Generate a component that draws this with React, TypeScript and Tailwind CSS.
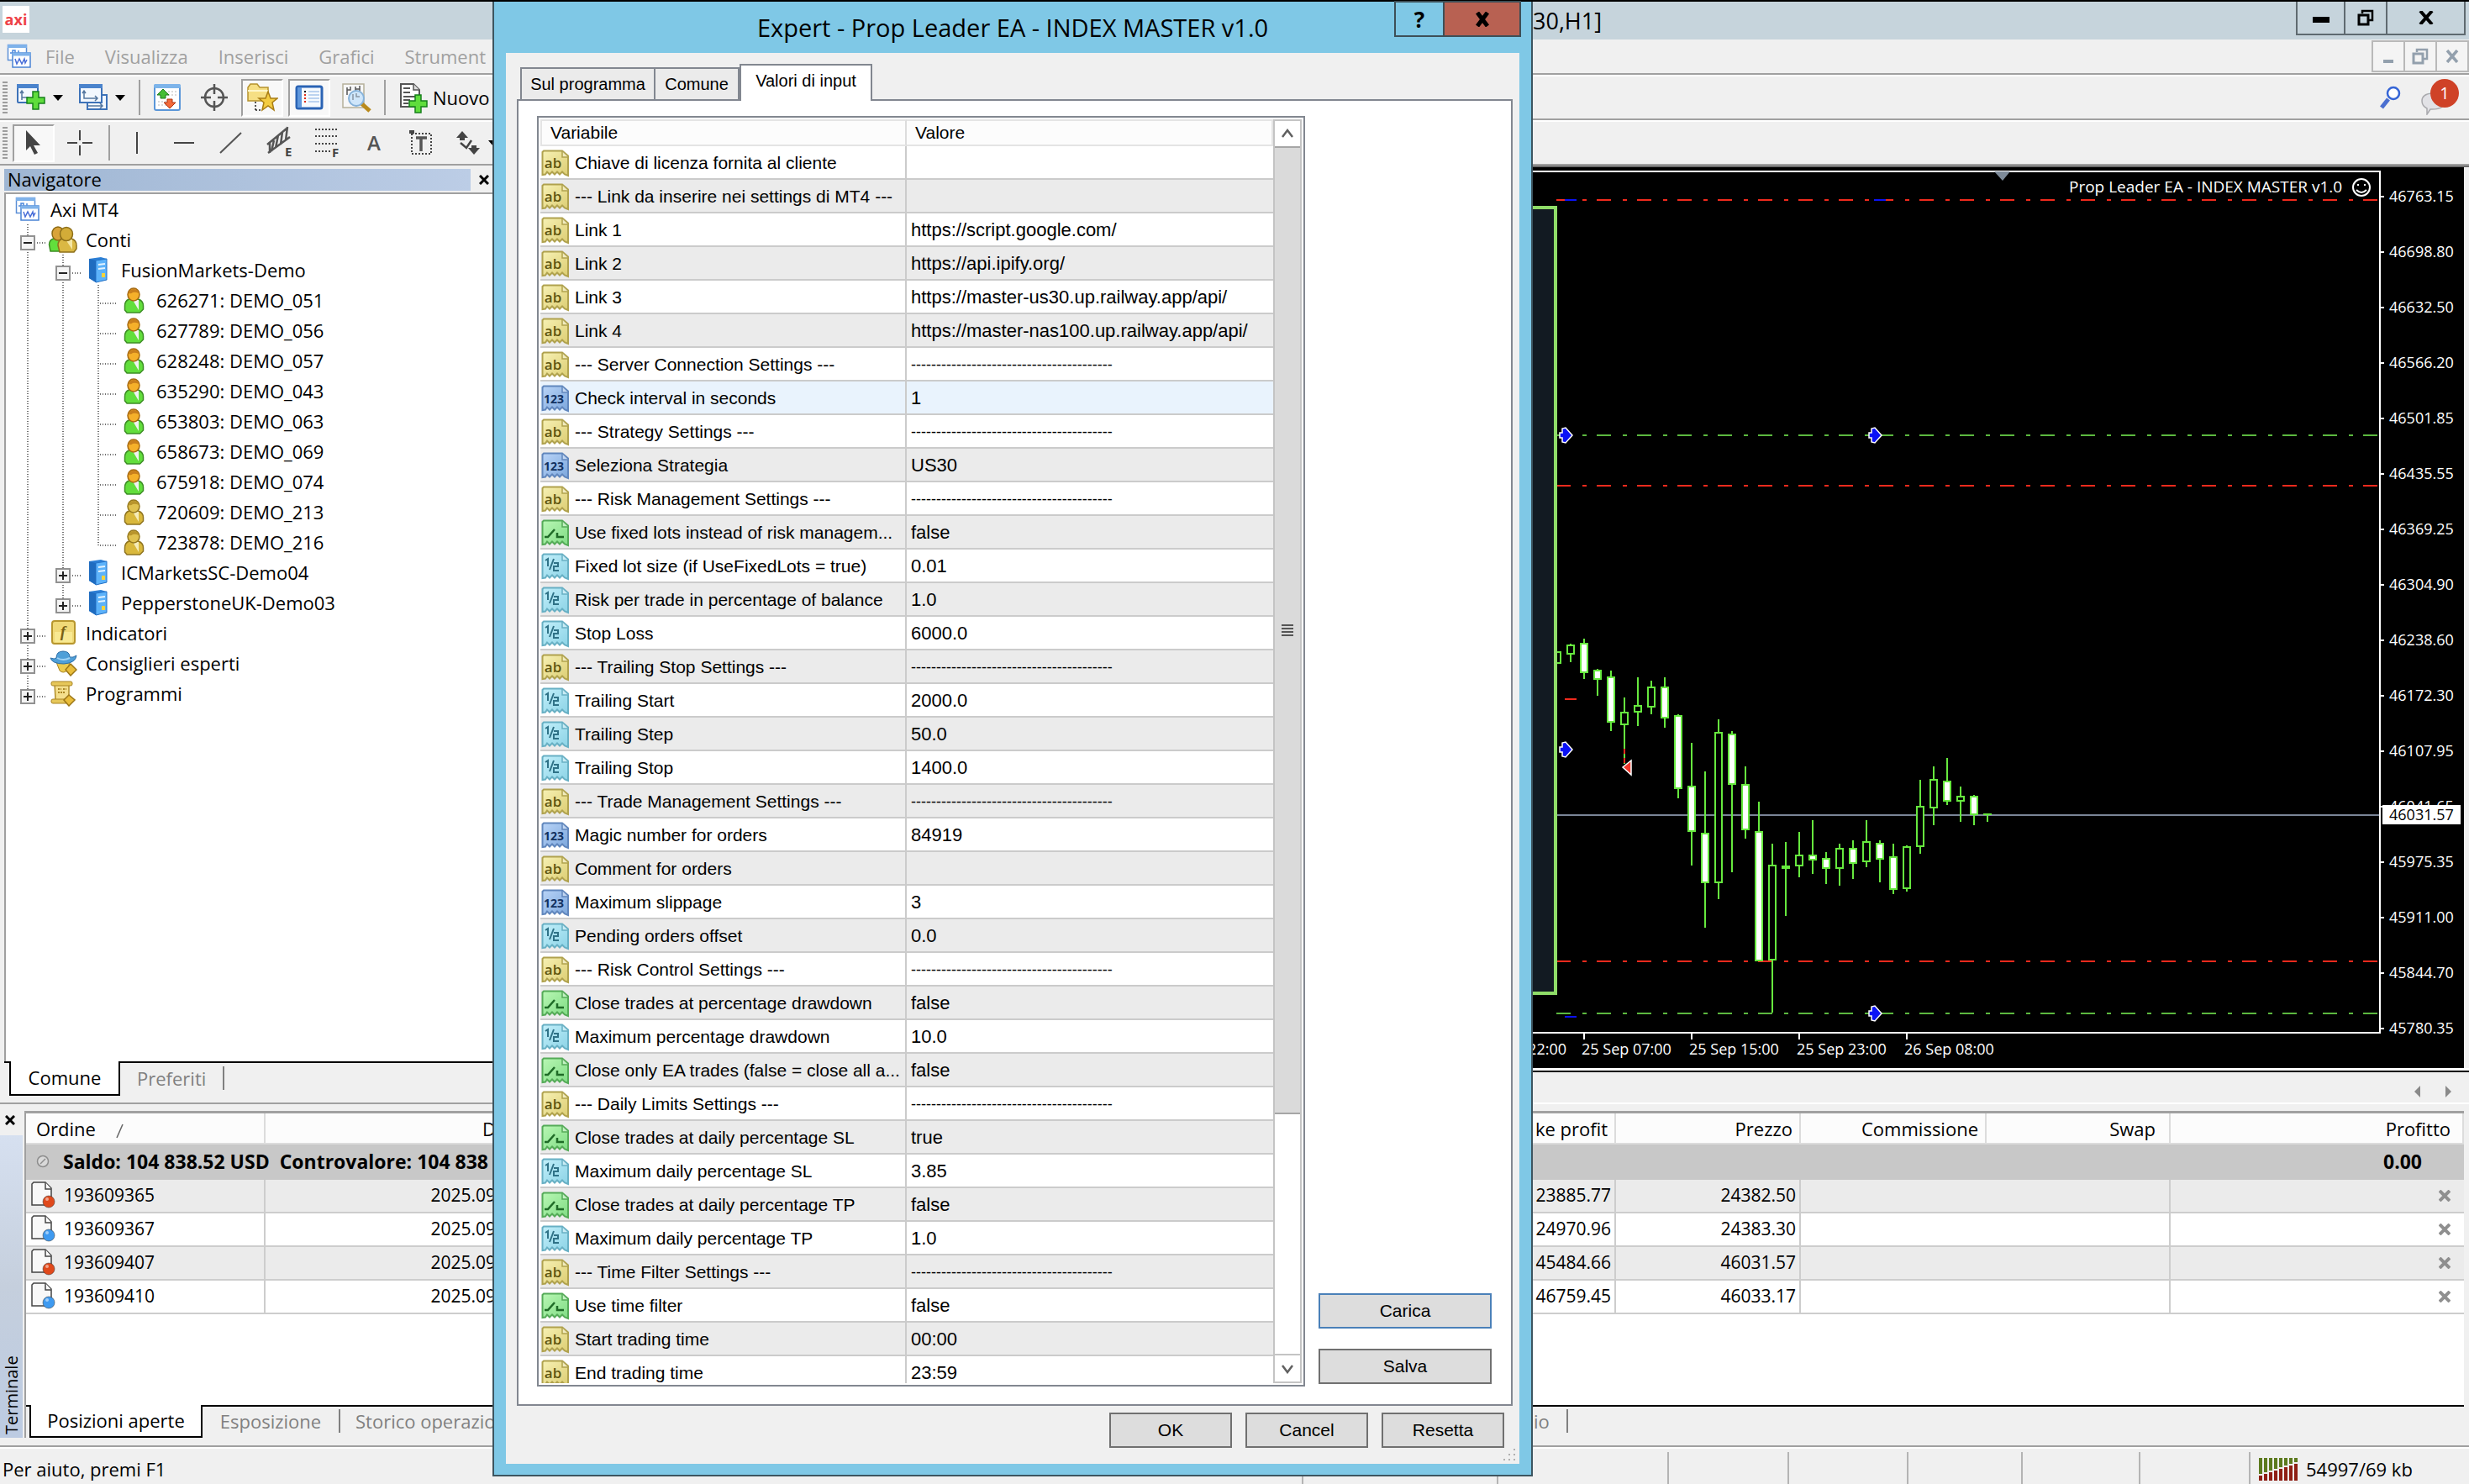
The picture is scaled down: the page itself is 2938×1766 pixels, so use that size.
import type { ReactNode } from "react"
import clsx from "clsx"

type ParamType = "text" | "int" | "bool" | "real"

interface Param {
  type: ParamType
  name: string
  value?: string
  active?: boolean
}

const RULE = "----------------------------------------"

const params: Param[] = [
  { type: "text", name: "Chiave di licenza fornita al cliente" },
  { type: "text", name: "--- Link da inserire nei settings di MT4 ---" },
  { type: "text", name: "Link 1", value: "https://script.google.com/" },
  { type: "text", name: "Link 2", value: "https://api.ipify.org/" },
  { type: "text", name: "Link 3", value: "https://master-us30.up.railway.app/api/" },
  { type: "text", name: "Link 4", value: "https://master-nas100.up.railway.app/api/" },
  { type: "text", name: "--- Server Connection Settings ---", value: RULE },
  { type: "int", name: "Check interval in seconds", value: "1", active: true },
  { type: "text", name: "--- Strategy Settings ---", value: RULE },
  { type: "int", name: "Seleziona Strategia", value: "US30" },
  { type: "text", name: "--- Risk Management Settings ---", value: RULE },
  { type: "bool", name: "Use fixed lots instead of risk managem...", value: "false" },
  { type: "real", name: "Fixed lot size (if UseFixedLots = true)", value: "0.01" },
  { type: "real", name: "Risk per trade in percentage of balance", value: "1.0" },
  { type: "real", name: "Stop Loss", value: "6000.0" },
  { type: "text", name: "--- Trailing Stop Settings ---", value: RULE },
  { type: "real", name: "Trailing Start", value: "2000.0" },
  { type: "real", name: "Trailing Step", value: "50.0" },
  { type: "real", name: "Trailing Stop", value: "1400.0" },
  { type: "text", name: "--- Trade Management Settings ---", value: RULE },
  { type: "int", name: "Magic number for orders", value: "84919" },
  { type: "text", name: "Comment for orders" },
  { type: "int", name: "Maximum slippage", value: "3" },
  { type: "real", name: "Pending orders offset", value: "0.0" },
  { type: "text", name: "--- Risk Control Settings ---", value: RULE },
  { type: "bool", name: "Close trades at percentage drawdown", value: "false" },
  { type: "real", name: "Maximum percentage drawdown", value: "10.0" },
  { type: "bool", name: "Close only EA trades (false = close all a...", value: "false" },
  { type: "text", name: "--- Daily Limits Settings ---", value: RULE },
  { type: "bool", name: "Close trades at daily percentage SL", value: "true" },
  { type: "real", name: "Maximum daily percentage SL", value: "3.85" },
  { type: "bool", name: "Close trades at daily percentage TP", value: "false" },
  { type: "real", name: "Maximum daily percentage TP", value: "1.0" },
  { type: "text", name: "--- Time Filter Settings ---", value: RULE },
  { type: "bool", name: "Use time filter", value: "false" },
  { type: "text", name: "Start trading time", value: "00:00" },
  { type: "text", name: "End trading time", value: "23:59" },
]

type GuideKind = "line" | "tee" | "end" | "minus" | "plus" | "plusEnd"

interface TreeRow {
  guides: GuideKind[]
  icon: "terminal" | "group" | "server" | "user" | "idle" | "indicator" | "expert" | "script"
  label: string
}

const tree: TreeRow[] = [
  { guides: [], icon: "terminal", label: "Axi MT4" },
  { guides: ["minus"], icon: "group", label: "Conti" },
  { guides: ["line", "minus"], icon: "server", label: "FusionMarkets-Demo" },
  { guides: ["line", "line", "tee"], icon: "user", label: "626271: DEMO_051" },
  { guides: ["line", "line", "tee"], icon: "user", label: "627789: DEMO_056" },
  { guides: ["line", "line", "tee"], icon: "user", label: "628248: DEMO_057" },
  { guides: ["line", "line", "tee"], icon: "user", label: "635290: DEMO_043" },
  { guides: ["line", "line", "tee"], icon: "user", label: "653803: DEMO_063" },
  { guides: ["line", "line", "tee"], icon: "user", label: "658673: DEMO_069" },
  { guides: ["line", "line", "tee"], icon: "user", label: "675918: DEMO_074" },
  { guides: ["line", "line", "tee"], icon: "idle", label: "720609: DEMO_213" },
  { guides: ["line", "line", "end"], icon: "idle", label: "723878: DEMO_216" },
  { guides: ["line", "plus"], icon: "server", label: "ICMarketsSC-Demo04" },
  { guides: ["line", "plusEnd"], icon: "server", label: "PepperstoneUK-Demo03" },
  { guides: ["plus"], icon: "indicator", label: "Indicatori" },
  { guides: ["plus"], icon: "expert", label: "Consiglieri esperti" },
  { guides: ["plusEnd"], icon: "script", label: "Programmi" },
]

const orders = [
  { id: "193609365", color: "#e0491b", date: "2025.09", tp: "23885.77", price: "24382.50" },
  { id: "193609367", color: "#3f9af0", date: "2025.09", tp: "24970.96", price: "24383.30" },
  { id: "193609407", color: "#e0491b", date: "2025.09", tp: "45484.66", price: "46031.57" },
  { id: "193609410", color: "#3f9af0", date: "2025.09", tp: "46759.45", price: "46033.17" },
]

// high, body top, body bottom, low, bearish
const candles: [number, number, number, number, boolean][] = [
  [567, 569, 579, 589, false],
  [561, 567, 601, 609, true],
  [597, 599, 609, 629, true],
  [599, 607, 660, 671, true],
  [631, 649, 663, 710, false],
  [607, 641, 648, 665, false],
  [611, 619, 642, 651, false],
  [607, 619, 655, 667, true],
  [651, 653, 739, 751, true],
  [685, 737, 790, 831, true],
  [719, 793, 851, 905, true],
  [657, 673, 851, 871, false],
  [671, 675, 734, 839, true],
  [713, 735, 788, 799, true],
  [755, 791, 944, 944, true],
  [805, 831, 943, 1006, false],
  [803, 832, 834, 891, false],
  [791, 819, 831, 845, false],
  [777, 819, 824, 841, true],
  [815, 823, 834, 853, true],
  [805, 811, 834, 855, false],
  [801, 811, 828, 847, true],
  [777, 803, 826, 833, false],
  [801, 805, 823, 851, true],
  [805, 821, 859, 865, true],
  [807, 809, 858, 862, false],
  [729, 761, 808, 817, false],
  [713, 729, 762, 783, false],
  [703, 731, 754, 759, true],
  [737, 749, 754, 779, false],
  [747, 749, 770, 783, true],
  [770, 770, 770, 779, false],
]

const prices = [
  "46763.15", "46698.80", "46632.50", "46566.20", "46501.85", "46435.55", "46369.25", "46304.90",
  "46238.60", "46172.30", "46107.95", "46041.65", "45975.35", "45911.00", "45844.70", "45780.35",
]

const times = ["25 Sep 07:00", "25 Sep 15:00", "25 Sep 23:00", "26 Sep 08:00"]

/* ---------- icons ---------- */

const paper: Record<ParamType, { from: string; to: string; line: string; ink: string; mark: string }> = {
  text: { from: "#f7f1b4", to: "#dccd72", line: "#b0a24e", ink: "#5f5510", mark: "ab" },
  int: { from: "#b9d4f7", to: "#7ba6dc", line: "#6187bd", ink: "#12315f", mark: "123" },
  bool: { from: "#b9f7b4", to: "#7fdc84", line: "#55ab58", ink: "#1f6b27", mark: "" },
  real: { from: "#c2effa", to: "#8bd3e6", line: "#68b0c4", ink: "#2f7287", mark: "" },
}

function ParamIcon({ type }: { type: ParamType }) {
  const c = paper[type]
  return (
    <svg width="34" height="33" viewBox="0 0 34 33" className="shrink-0" aria-hidden="true">
      <defs>
        <linearGradient id={`paper-${type}`} x1="0" y1="0" x2="1" y2="1">
          <stop offset="0" stopColor={c.from} />
          <stop offset="1" stopColor={c.to} />
        </linearGradient>
      </defs>
      <path
        d="M3 1.5H25l7 6V31l-4-1.5-3-3-3 3-3-3-3 3-3-3-3 3-3-3-2 3L1.5 30V3z"
        fill={`url(#paper-${type})`}
        stroke={c.line}
        strokeWidth="2"
      />
      <path d="M25 2v7h7" fill="#ffffff66" stroke={c.line} strokeWidth="1.5" />
      {type === "text" && (
        <text x="14" y="22" textAnchor="middle" fontSize="17" fontWeight="600" fill={c.ink} fontFamily="Open Sans">
          {c.mark}
        </text>
      )}
      {type === "int" && (
        <text x="15" y="22" textAnchor="middle" fontSize="14" fontWeight="700" fill={c.ink} fontFamily="Open Sans">
          {c.mark}
        </text>
      )}
      {type === "bool" && (
        <path d="M4 21h4l8-9M19 16v5h8" fill="none" stroke={c.ink} strokeWidth="2.5" />
      )}
      {type === "real" && (
        <>
          <path d="M5 9l3-2v9M15 7l-5 13" fill="none" stroke={c.ink} strokeWidth="2" />
          <path d="M15 12h5v4h-5v5h6" fill="none" stroke={c.ink} strokeWidth="2" />
        </>
      )}
    </svg>
  )
}

function TerminalIcon() {
  return (
    <svg width="30" height="30" viewBox="0 0 30 30" aria-hidden="true">
      <rect x="1.5" y="1.5" width="22" height="18" fill="#fff" stroke="#5b8fd6" strokeWidth="1.5" />
      <rect x="1" y="1" width="23" height="4" fill="#7fb2ea" />
      <path d="M4 11h3v-3h3v4h4v-4" fill="none" stroke="#4b86dc" strokeWidth="1.5" />
      <rect x="7" y="11" width="21" height="17" fill="#fff" stroke="#4a83d4" strokeWidth="1.5" />
      <rect x="6.5" y="10.5" width="22" height="4" fill="#7fb2ea" />
      <path d="M10 18l2 6 3-6 3 6 3-6 1 5 2-4" fill="none" stroke="#4a6fd8" strokeWidth="1.5" />
    </svg>
  )
}

function UserIcon({ idle }: { idle?: boolean }) {
  return (
    <svg width="25" height="31" viewBox="0 0 25 31" aria-hidden="true">
      <path
        d="M1.5 22q0-6 5-8h11q6 2 6 8v4l-4 4H4l-2.500-3z"
        fill={idle ? "#d9b83c" : "#62de3c"}
        stroke={idle ? "#8f7420" : "#3c8d24"}
        strokeWidth="1.5"
      />
      <path d="M11 15l7 12V15z" fill={idle ? "#f6ecb8" : "#f1f1f1"} />
      <ellipse cx="12" cy="8.500" rx="7" ry="7.500" fill={idle ? "#e0c250" : "#f5b02a"} stroke={idle ? "#96791f" : "#a66a12"} strokeWidth="1.5" />
      <path d="M6 7q1-5 6-5t6 5q-4-2-7-1-2 2-5 1z" fill={idle ? "#b8942c" : "#c97f1c"} />
    </svg>
  )
}

function GroupIcon() {
  return (
    <svg width="36" height="32" viewBox="0 0 36 32" aria-hidden="true">
      <path d="M1.500 22q0-5 5-7h8v15H3z" fill="#62de3c" stroke="#3c8d24" strokeWidth="1.500" />
      <ellipse cx="12" cy="9" rx="7" ry="8" fill="#d9a33a" stroke="#8d6a14" strokeWidth="1.500" />
      <path d="M12 23q0-6 5-8h11q6 2 6 8v4l-3 4H14z" fill="#dab844" stroke="#8d6f1a" strokeWidth="1.500" />
      <path d="M21 16l8 12V16z" fill="#f4e6a4" />
      <ellipse cx="22" cy="9.500" rx="7.500" ry="8" fill="#d3ac38" stroke="#8d6f1a" strokeWidth="1.500" />
    </svg>
  )
}

function ServerIcon() {
  return (
    <svg width="24" height="32" viewBox="0 0 24 32" aria-hidden="true">
      <path d="M1 3l14-2 7 2v25l-13 3-8-5z" fill="#2c7fd6" />
      <path d="M9 5l13-2v25L9 31z" fill="#5cb2fa" stroke="#2673c7" />
      <path d="M1 3l8 2v26l-8-5z" fill="#1f6cc0" />
      <path d="M12 10l8-1M12 15l8-1" stroke="#e3f3ff" strokeWidth="2" />
      <rect x="16" y="20" width="4" height="5" fill="#f5d33c" />
    </svg>
  )
}

function IndicatorIcon() {
  return (
    <svg width="29" height="30" viewBox="0 0 29 30" aria-hidden="true">
      <rect x="1" y="1" width="27" height="27" rx="3" fill="#f0d978" stroke="#b8972e" strokeWidth="2" />
      <rect x="4" y="14" width="21" height="12" fill="#fbf09c" opacity=".7" />
      <text x="14" y="20" textAnchor="middle" fontSize="19" fontStyle="italic" fontWeight="700" fill="#7a6114" fontFamily="Liberation Serif">
        f
      </text>
    </svg>
  )
}

function ExpertIcon() {
  return (
    <svg width="33" height="31" viewBox="0 0 33 31" aria-hidden="true">
      <path d="M8 14h16l-3 10q-5 4-9 0z" fill="#eccb4e" stroke="#a98422" />
      <path d="M1 9q5 2 7 0 0-8 8-8t8 7q4 1 8-2-1 9-15 10Q3 16 1 9z" fill="#4f9fd8" stroke="#2b6da6" />
      <path d="M9 9q7 4 15 0" fill="none" stroke="#9fd2f4" strokeWidth="2" />
      <path d="M25 16l7 7-7 7-6-7z" fill="#e9bd3a" stroke="#9c7616" strokeWidth="1.500" />
    </svg>
  )
}

function ScriptIcon() {
  return (
    <svg width="30" height="31" viewBox="0 0 30 31" aria-hidden="true">
      <path d="M5 3h17v20H6z" fill="#f4df8c" stroke="#b08d2a" strokeWidth="1.500" />
      <rect x="1" y="1" width="25" height="5" rx="2" fill="#e6c75a" stroke="#a98422" />
      <rect x="1" y="22" width="20" height="5" rx="2" fill="#e6c75a" stroke="#a98422" />
      <path d="M9 10h4M15 10h4M9 14h8" stroke="#a98422" strokeWidth="2" strokeDasharray="2 1" />
      <path d="M22 17l7 6-7 7-6-7z" fill="#e9bd3a" stroke="#9c7616" strokeWidth="1.500" />
    </svg>
  )
}

function TreeIcon({ icon }: { icon: TreeRow["icon"] }) {
  switch (icon) {
    case "terminal":
      return <TerminalIcon />
    case "group":
      return <GroupIcon />
    case "server":
      return <ServerIcon />
    case "user":
      return <UserIcon />
    case "idle":
      return <UserIcon idle />
    case "indicator":
      return <IndicatorIcon />
    case "expert":
      return <ExpertIcon />
    default:
      return <ScriptIcon />
  }
}

function Guide({ kind }: { kind: GuideKind }) {
  const boxed = kind === "minus" || kind === "plus" || kind === "plusEnd"
  const last = kind === "end" || kind === "plusEnd"
  return (
    <svg width="42" height="36" viewBox="0 0 42 36" className="shrink-0" aria-hidden="true">
      <path d={last ? "M21 0V22" : "M21 0V36"} stroke="#707070" strokeWidth="2" strokeDasharray="1 2" />
      {kind !== "line" && <path d="M23 22H42" stroke="#707070" strokeWidth="2" strokeDasharray="1 2" />}
      {boxed && (
        <>
          <rect x="13" y="14" width="16" height="16" fill="#f4f4f4" stroke="#919191" strokeWidth="2" />
          <path d={kind === "minus" ? "M16 22H26" : "M16 22H26M21 17V27"} stroke="#222" strokeWidth="2" />
        </>
      )}
    </svg>
  )
}

/* Green plus shared by the "new chart" and "new order" icons */
function Plus({ x, y }: { x: number; y: number }) {
  return (
    <path
      transform={`translate(${x} ${y})`}
      d="M8 1h7v7h7v7h-7v7H8v-7H1V8h7z"
      fill="#5fdd3c"
      stroke="#16801a"
      strokeWidth="1.500"
    />
  )
}

function NewChartIcon() {
  return (
    <svg width="36" height="34" viewBox="0 0 36 34" aria-hidden="true">
      <rect x="2" y="2" width="24" height="21" rx="1" fill="#f3f8fe" stroke="#3d72b8" strokeWidth="2" />
      <rect x="1" y="1" width="26" height="5" fill="#4a83cc" />
      <path d="M7 9v11M5 12l2-3 2 3M7 17h8" fill="none" stroke="#55779f" strokeWidth="1.500" />
      <Plus x={12} y={9} />
    </svg>
  )
}

function WindowsIcon() {
  return (
    <svg width="36" height="34" viewBox="0 0 36 34" aria-hidden="true">
      <rect x="11" y="14" width="23" height="17" fill="#f3f8fe" stroke="#3d72b8" strokeWidth="2" />
      <rect x="2" y="2" width="26" height="21" fill="#f3f8fe" stroke="#3d72b8" strokeWidth="2" />
      <rect x="1" y="1" width="28" height="5" fill="#4a83cc" />
      <path d="M7 9v9h16M5 12l2-3 2 3M20 15l3 3-3 3M12 27h17M26 24l3 3-3 3" fill="none" stroke="#55779f" strokeWidth="1.500" />
    </svg>
  )
}

function MarketIcon() {
  return (
    <svg width="34" height="34" viewBox="0 0 34 34" aria-hidden="true">
      <rect x="2" y="2" width="30" height="30" rx="2" fill="#fff" stroke="#5a96d8" strokeWidth="2" />
      <rect x="1" y="1" width="32" height="5" rx="2" fill="#7db4ea" />
      <path d="M18 10h11M18 14h11M6 22h11M6 26h11" stroke="#cfcfcf" strokeWidth="1.500" strokeDasharray="2 2" />
      <path d="M12 7l7 7h-4v4H9v-4H5z" fill="#45bd36" stroke="#1d7a1c" />
      <path d="M20 30l-7-7h4v-4h6v4h4z" fill="#f26a3a" stroke="#b0330f" />
    </svg>
  )
}

function TargetIcon() {
  return (
    <svg width="34" height="34" viewBox="0 0 34 34" aria-hidden="true">
      <circle cx="17" cy="17" r="11" fill="none" stroke="#555" strokeWidth="2.500" />
      <path d="M17 1v12M17 21v12M1 17h12M21 17h12" stroke="#555" strokeWidth="2.500" />
    </svg>
  )
}

function FolderStarIcon() {
  return (
    <svg width="38" height="36" viewBox="0 0 38 36" aria-hidden="true">
      <path d="M2 22V6l3-4h8l3 4h10v16z" fill="#f6df84" stroke="#b5922e" strokeWidth="1.500" />
      <path d="M2 10h24" stroke="#fff6c9" strokeWidth="2" />
      <path d="M11 23v10M11 33h6" fill="none" stroke="#222" strokeWidth="1.500" strokeDasharray="2 2" />
      <path d="M26 11l3 8h8l-6 5 2 9-7-5-7 5 2-9-6-5h8z" fill="#f3cc43" stroke="#a97d14" strokeWidth="1.500" />
    </svg>
  )
}

function NavigatorIcon() {
  return (
    <svg width="34" height="30" viewBox="0 0 34 30" aria-hidden="true">
      <rect x="2" y="2" width="30" height="26" rx="2" fill="#f6fafe" stroke="#2a63b4" strokeWidth="3" />
      <rect x="3" y="3" width="5" height="24" fill="#5f97dc" />
      <path d="M16 8h13M16 12h13M16 16h13M16 20h13" stroke="#a9c6ec" strokeWidth="1.500" />
      <path d="M11 8h2" stroke="#111" strokeWidth="2" />
      <path d="M11 12h2M11 16h2M11 20h2" stroke="#e02a1b" strokeWidth="2" />
    </svg>
  )
}

function TesterIcon() {
  return (
    <svg width="38" height="36" viewBox="0 0 38 36" aria-hidden="true">
      <rect x="2" y="2" width="25" height="28" fill="#f7f7f7" stroke="#b5b09a" strokeWidth="1.500" />
      <path d="M7 6v9M7 9h4V5M17 5v8M17 8h5V5M22 4v9" fill="none" stroke="#555" strokeWidth="1.500" />
      <path d="M24 25l10 9" stroke="#b98a1c" strokeWidth="5" />
      <circle cx="18" cy="19" r="9" fill="#cfe6fa" stroke="#86b2da" strokeWidth="2" />
      <path d="M14 14v7M18 13v4h4" fill="none" stroke="#8b97a4" strokeWidth="1.500" />
    </svg>
  )
}

function NewOrderIcon() {
  return (
    <svg width="36" height="37" viewBox="0 0 36 37" aria-hidden="true">
      <path d="M2 2h15l7 7v20H2z" fill="#fff" stroke="#555" strokeWidth="2" />
      <path d="M17 2v7h7" fill="#ddd" stroke="#555" strokeWidth="1.500" />
      <path d="M5 7h8M5 12h8M5 17h14M5 21h8M5 25h6" stroke="#555" strokeWidth="2" />
      <Plus x={11} y={14} />
    </svg>
  )
}

function OrderIcon({ color }: { color: string }) {
  return (
    <svg width="29" height="32" viewBox="0 0 29 32" aria-hidden="true">
      <path d="M1 3l2-2h14l7 7v20H1z" fill="#f8f8f8" stroke="#444" strokeWidth="1.500" />
      <path d="M17 1v8h7" fill="#fff" stroke="#444" strokeWidth="1.500" />
      <circle cx="21" cy="24" r="7" fill={color} stroke="#333" strokeOpacity=".5" />
      <circle cx="19" cy="21" r="2" fill="#fff" opacity=".5" />
    </svg>
  )
}

/* ---------- toolbars ---------- */

function Grip() {
  return (
    <svg width="6" height="38" viewBox="0 0 6 38" className="shrink-0" aria-hidden="true">
      <path d="M3 0V38" stroke="#9d9d9d" strokeWidth="6" strokeDasharray="2 2" />
    </svg>
  )
}

function Tool({ label, className, pressed, children }: { label: string; className?: string; pressed?: boolean; children: ReactNode }) {
  return (
    <button
      type="button"
      aria-label={label}
      aria-pressed={pressed}
      className={clsx(
        "flex h-[45px] shrink-0 items-center justify-center",
        pressed && "border-2 border-t-[#a0a0a0] border-r-white border-b-white border-l-[#a0a0a0] bg-[#f8f8f8]",
        className,
      )}
    >
      {children}
    </button>
  )
}

function Caret({ className }: { className?: string }) {
  return (
    <svg width="12" height="8" viewBox="0 0 12 8" className={clsx("shrink-0", className)} aria-hidden="true">
      <path d="M0 1h12L6 8z" fill="#000" />
    </svg>
  )
}

function Separator({ className }: { className?: string }) {
  return <span className={clsx("h-[42px] w-0.5 shrink-0 bg-[#a0a0a0]", className)} />
}

function MainToolbar() {
  return (
    <div className="flex h-[54px] items-center border-t-2 border-b-2 border-t-white border-b-[#a0a0a0] pl-[3px]">
      <Grip />
      <Tool label="Nuovo grafico" className="ml-2.5 w-9"><NewChartIcon /></Tool>
      <Caret className="ml-2" />
      <Tool label="Profili" className="ml-[18px] w-9"><WindowsIcon /></Tool>
      <Caret className="ml-2" />
      <Separator className="ml-4" />
      <Tool label="Market" className="ml-3.5 w-9"><MarketIcon /></Tool>
      <Tool label="Finestra dati" className="ml-5 w-9"><TargetIcon /></Tool>
      <Tool label="Navigatore" className="ml-3.5 w-[50px]" pressed><FolderStarIcon /></Tool>
      <Tool label="Terminale" className="ml-1.5 w-[50px]" pressed><NavigatorIcon /></Tool>
      <Tool label="Tester" className="ml-3 w-10"><TesterIcon /></Tool>
      <Separator className="ml-3" />
      <button type="button" className="ml-4 flex items-center gap-1 text-[22px] leading-7">
        <NewOrderIcon />
        Nuovo
      </button>
      <div className="ml-auto flex items-center gap-5 pr-2.5">
        <button type="button" aria-label="Cerca">
          <svg width="30" height="30" viewBox="0 0 30 30" aria-hidden="true">
            <path d="M12 17L4 27" stroke="#4a6fd0" strokeWidth="5" />
            <circle cx="18" cy="10" r="7" fill="#fff" stroke="#3565d6" strokeWidth="2.500" />
          </svg>
        </button>
        <button type="button" aria-label="Notifiche" className="relative h-[44px] w-[48px]">
          <svg width="32" height="30" viewBox="0 0 32 30" className="mt-3" aria-hidden="true">
            <path d="M2 13q0-8 12-9t14 9-14 10h-2l-4 6v-7Q2 19 2 13z" fill="#e2e2e6" stroke="#a9a9ad" strokeWidth="1.500" />
          </svg>
          <span className="absolute top-0 right-0.5 flex size-[34px] items-center justify-center rounded-full bg-[#cf4227] text-[20px] leading-6 text-white">
            1
          </span>
        </button>
      </div>
    </div>
  )
}

function DrawingToolbar() {
  return (
    <div className="flex h-[54px] items-center border-t-2 border-b-2 border-t-white border-b-[#a0a0a0] pl-[3px]">
      <Grip />
      <Tool label="Cursore" className="ml-1.5 w-[50px]" pressed>
        <svg width="20" height="32" viewBox="0 0 20 32" aria-hidden="true">
          <path d="M1 1v24l5-5 5 10 4-2-5-9h8z" fill="#444" />
        </svg>
      </Tool>
      <Tool label="Mirino" className="ml-3.5 w-8">
        <svg width="32" height="32" viewBox="0 0 32 32" aria-hidden="true">
          <path d="M16 1v12M16 19v12M1 16h12M19 16h12" stroke="#444" strokeWidth="2" />
        </svg>
      </Tool>
      <Separator className="ml-[18px]" />
      <Tool label="Linea verticale" className="ml-4 w-8">
        <svg width="4" height="28" viewBox="0 0 4 28" aria-hidden="true"><path d="M2 1v26" stroke="#444" strokeWidth="2" /></svg>
      </Tool>
      <Tool label="Linea orizzontale" className="ml-6 w-8">
        <svg width="26" height="4" viewBox="0 0 26 4" aria-hidden="true"><path d="M1 2h24" stroke="#444" strokeWidth="2" /></svg>
      </Tool>
      <Tool label="Trendline" className="ml-6 w-8">
        <svg width="28" height="28" viewBox="0 0 28 28" aria-hidden="true"><path d="M1 26L26 2" stroke="#555" strokeWidth="2" /></svg>
      </Tool>
      <Tool label="Canale equidistante" className="ml-6 w-9">
        <svg width="36" height="42" viewBox="0 0 36 42" aria-hidden="true">
          <path d="M3 23L26 4M4 33L30 14M8 31l3-13M13 27l3-15M19 23l2-15M25 18l2-16M6 20v13" stroke="#555" strokeWidth="2.500" />
          <text x="24" y="37" fontSize="15" fontWeight="700" fill="#444" fontFamily="Open Sans">E</text>
        </svg>
      </Tool>
      <Tool label="Fibonacci" className="ml-5 w-9">
        <svg width="34" height="44" viewBox="0 0 34 44" aria-hidden="true">
          <path d="M3 6h27M3 14h27M3 23h27M3 32h18" stroke="#444" strokeWidth="2" strokeDasharray="2 2" />
          <text x="23" y="39" fontSize="15" fontWeight="700" fill="#444" fontFamily="Open Sans">F</text>
        </svg>
      </Tool>
      <Tool label="Testo" className="ml-[22px] w-8"><span className="text-[24px] leading-7 font-semibold text-[#555]">A</span></Tool>
      <Tool label="Etichetta" className="ml-6 w-8">
        <svg width="28" height="30" viewBox="0 0 28 30" aria-hidden="true">
          <rect x="3" y="4" width="23" height="24" fill="none" stroke="#444" strokeWidth="2" strokeDasharray="2 2" />
          <path d="M0 0h6v4H0z" fill="#444" />
          <path d="M8 9h13M14 9v16" stroke="#555" strokeWidth="3.500" />
        </svg>
      </Tool>
      <Tool label="Frecce" className="ml-6 w-8">
        <svg width="30" height="30" viewBox="0 0 30 30" aria-hidden="true">
          <path d="M8 1l7 8h-4v3H5V9H1z" fill="#444" />
          <path d="M22 29l-7-8h4v-3h6v3h4z" fill="#444" />
          <path d="M6 15l7 6 6-9" fill="none" stroke="#444" strokeWidth="2.500" />
        </svg>
      </Tool>
      <Caret className="ml-2" />
    </div>
  )
}

/* ---------- panels ---------- */

function Navigator() {
  return (
    <aside className="flex w-[586px] shrink-0 flex-col border-b-2 border-[#a0a0a0] pb-2 pl-[5px]">
      <div className="mt-1 flex h-7 items-start">
        <h2 className="flex h-[26px] flex-1 items-center bg-linear-to-r from-[#9fb6d3] to-[#bccde6] pb-0.5 pl-1 text-[22px] leading-6">
          Navigatore
        </h2>
        <button type="button" aria-label="Chiudi navigatore" className="flex h-[26px] w-[26px] items-center justify-end pr-1">
          <svg width="12" height="12" viewBox="0 0 12 12" aria-hidden="true">
            <path d="M1 1l10 10M11 1L1 11" stroke="#000" strokeWidth="3" />
          </svg>
        </button>
      </div>
      <ul className="flex-1 border-t-2 border-l-2 border-[#a0a0a0] bg-white pl-[5px] text-[22px] leading-9">
        {tree.map((row) => (
          <li key={row.label} className="flex h-9 items-center">
            {row.guides.map((kind, i) => (
              <Guide key={i} kind={kind} />
            ))}
            <span className="flex w-[42px] justify-center">
              <TreeIcon icon={row.icon} />
            </span>
            <span className="ml-1.5">{row.label}</span>
          </li>
        ))}
      </ul>
      <div className="flex h-[41px] text-[22px] leading-6">
        <span className="w-1.5 border-t-2 border-black" />
        <button type="button" className="w-[132px] border-x-2 border-b-2 border-black bg-white pb-0.5">Comune</button>
        <div className="flex flex-1 items-center border-t-2 border-black pb-1 pl-5">
          <button type="button" className="text-[#808080]">Preferiti</button>
          <span className="ml-5 h-7 w-0.5 bg-[#808080]" />
        </div>
      </div>
    </aside>
  )
}

function Marker({ x, y }: { x: number; y: number }) {
  return (
    <path
      transform={`translate(${x} ${y})`}
      d="M-7 -3h3v-5l4 -1L8 0L0 9l-4 -1v-5h-3z"
      fill="#0b12f5"
      stroke="#fff"
      strokeWidth="1.500"
    />
  )
}

function Chart() {
  return (
    <svg width="1108" height="1072" viewBox="0 0 1108 1072" className="block shrink-0" fontFamily="'Open Sans', sans-serif" fontSize="18">
      <g fill="none" strokeWidth="2" strokeDasharray="17 14 5 12">
        <path d="M28 39H1008" stroke="#f02a1d" />
        <path d="M28 319H1008" stroke="#5cb83f" />
        <path d="M28 379H1008" stroke="#f02a1d" />
        <path d="M28 945H1008" stroke="#f02a1d" />
        <path d="M28 1007H1008" stroke="#5cb83f" />
      </g>
      <path d="M38 39h14M406 39h14M38 1011h14" stroke="#0b12f5" strokeWidth="2" />
      <path d="M38 633h14" stroke="#f02a1d" strokeWidth="2" />
      <path d="M28 771H1008" stroke="#7a8597" strokeWidth="2" />

      <g stroke="#66e83e" strokeWidth="2">
        <rect x="24" y="577" width="9" height="13" fill="#000" />
        {candles.map(([high, top, bottom, low, bear], i) => {
          const x = 45 + i * 16
          return (
            <g key={i}>
              <path d={`M${x} ${high}V${low}`} />
              <rect x={x - 4} y={top} width="8" height={Math.max(bottom - top, 0)} fill={bear ? "#fff" : "#000"} />
              {bottom === top && <path d={`M${x - 5} ${top}h10`} />}
            </g>
          )
        })}
      </g>
      <path d="M109 692v18" stroke="#f02a1d" strokeWidth="2" strokeDasharray="6 5" />
      <path d="M107 714l10-8v17z" fill="#f2382b" stroke="#fff" strokeWidth="1.500" />

      {/* EA panel edge */}
      <rect x="-20" y="48" width="47" height="935" fill="#121a22" stroke="#8fdc68" strokeWidth="4" />

      <Marker x={39} y={319} />
      <Marker x={407} y={319} />
      <Marker x={39} y={693} />
      <Marker x={407} y={1007} />

      {/* frame and axes */}
      <path d="M0 5H1008V1030H0" fill="none" stroke="#fff" strokeWidth="2" />
      <path d="M549 5h19l-9 11z" fill="#7d8a99" />
      <text x="638" y="30" fontSize="19" fill="#fff">Prop Leader EA - INDEX MASTER v1.0</text>
      <g fill="none" stroke="#fff" strokeWidth="2">
        <circle cx="986" cy="24" r="10" />
        <path d="M982 20v2M990 20v2M980 27q6 6 12 0" />
      </g>
      {prices.map((price, i) => (
        <g key={price} fill="#fff">
          <rect x="1008" y={34 + i * 66} width="5" height="2" />
          <text x="1019" y={41 + i * 66}>{price}</text>
        </g>
      ))}
      <rect x="1011" y="759" width="93" height="23" fill="#fff" />
      <text x="1019" y="777" fill="#000">46031.57</text>
      <text x="40" y="1056" fill="#fff" textAnchor="end">22:00</text>
      {times.map((time, i) => (
        <g key={time} fill="#fff">
          <rect x={60 + i * 128} y="1030" width="2" height="8" />
          <text x={58 + i * 128} y="1056">{time}</text>
        </g>
      ))}
    </svg>
  )
}

function ChartPane() {
  return (
    <section className="flex min-w-0 flex-1 flex-col border-t-2 border-[#6d6d6d]">
      <div className="mr-1.5 flex flex-1 items-start justify-end overflow-hidden bg-black">
        <Chart />
      </div>
      <div className="h-[3px] bg-white" />
      <div className="h-0.5 bg-black" />
      <div className="flex h-[38px] items-start justify-end gap-[30px] border-b-2 border-white pt-4 pr-5">
        <button type="button" aria-label="Scorri a sinistra">
          <svg width="8" height="14" viewBox="0 0 8 14" aria-hidden="true"><path d="M8 0v14L1 7z" fill="#8a8a8a" /></svg>
        </button>
        <button type="button" aria-label="Scorri a destra">
          <svg width="8" height="14" viewBox="0 0 8 14" aria-hidden="true"><path d="M0 0v14l7-7z" fill="#8a8a8a" /></svg>
        </button>
      </div>
    </section>
  )
}

function Terminal() {
  const head = "h-[37px] border-r-2 border-b-2 border-[#dcdcdc] font-normal"
  return (
    <section className="flex h-[408px] shrink-0 border-b-2 border-[#a0a0a0] pb-[9px]">
      <div className="flex w-[29px] shrink-0 flex-col">
        <button type="button" aria-label="Chiudi terminale" className="flex h-[37px] items-center pl-1.5">
          <svg width="12" height="12" viewBox="0 0 12 12" aria-hidden="true">
            <path d="M1 1l10 10M11 1L1 11" stroke="#000" strokeWidth="3" />
          </svg>
        </button>
        <h2 className="flex w-[27px] flex-1 rotate-180 items-center bg-linear-to-b from-[#bccbe2] via-[#c5cfdd] to-[#d6e0f0] pt-1 text-[20px] leading-6 [writing-mode:vertical-rl]">
          Terminale
        </h2>
      </div>
      <div className="mt-2 mr-1.5 flex flex-1 flex-col border-t-[3px] border-l-2 border-[#a0a0a0] text-[22px] leading-7">
        <div className="flex-1 bg-white">
          <table className="w-full table-fixed border-separate border-spacing-0 text-right">
            <colgroup>
              <col className="w-[285px]" />
              <col className="w-[274px]" />
              <col />
              <col className="w-[100px]" />
              <col className="w-[220px]" />
              <col className="w-[221px]" />
              <col className="w-[219px]" />
              <col className="w-[349px]" />
            </colgroup>
            <thead className="bg-[#fcfcfc]">
              <tr>
                <th className={clsx(head, "pl-3 text-left")}>
                  Ordine
                  <svg width="10" height="18" viewBox="0 0 10 18" className="ml-6 inline" aria-hidden="true">
                    <path d="M1 17L8 1" stroke="#666" strokeWidth="1.500" />
                  </svg>
                </th>
                <th className="border-b-2 border-[#dcdcdc] pr-0 font-normal">D</th>
                <th className={head} />
                <th className={clsx(head, "pr-2")}>ke profit</th>
                <th className={clsx(head, "pr-2")}>Prezzo</th>
                <th className={clsx(head, "pr-2")}>Commissione</th>
                <th className={clsx(head, "pr-4")}>Swap</th>
                <th className={clsx(head, "pr-3.5")}>Profitto</th>
              </tr>
            </thead>
            <tbody>
              <tr className="bg-[#c8c8c8] text-[23px] font-bold">
                <td colSpan={2} className="h-[42px] pb-0.5 pl-3 text-left whitespace-nowrap">
                  <div className="flex items-center gap-4">
                    <svg width="16" height="16" viewBox="0 0 16 16" className="shrink-0" aria-hidden="true">
                      <circle cx="8" cy="8" r="6.500" fill="#d9d9d9" stroke="#8d8d8d" strokeWidth="1.500" />
                      <path d="M5 11l6-6" stroke="#8d8d8d" strokeWidth="1.500" />
                    </svg>
                    <span className="whitespace-pre">Saldo: 104 838.52 USD  Controvalore: 104 838</span>
                  </div>
                </td>
                <td colSpan={5} />
                <td className="pr-[50px] pb-0.5">0.00</td>
              </tr>
              {orders.map((order, i) => (
                <tr
                  key={order.id}
                  className={clsx(
                    "text-[21px] [&>td]:border-b-2 [&>td]:border-[#cdcdcd] [&>td]:pb-0.5",
                    i % 2 === 0 ? "bg-[#ebebeb]" : "bg-white",
                  )}
                >
                  <td className="h-10 border-r-2 pl-1.5">
                    <div className="flex items-center gap-2.5">
                      <OrderIcon color={order.color} />
                      {order.id}
                    </div>
                  </td>
                  <td className="pr-0">{order.date}</td>
                  <td />
                  <td className="border-r-2 pr-1">{order.tp}</td>
                  <td className="border-r-2 pr-1">{order.price}</td>
                  <td />
                  <td className="border-r-2" />
                  <td className="pr-4">
                    <button type="button" aria-label={`Chiudi ${order.id}`}>
                      <svg width="14" height="14" viewBox="0 0 14 14" aria-hidden="true">
                        <path d="M1 1l12 12M13 1L1 13" stroke="#8f8f8f" strokeWidth="4" />
                      </svg>
                    </button>
                  </td>
                </tr>
              ))}
            </tbody>
          </table>
        </div>
        <div className="flex h-[39px] text-[#808080]">
          <span className="w-1 shrink-0 border-t-2 border-black" />
          <button type="button" className="w-[206px] shrink-0 border-x-2 border-b-2 border-black bg-white pb-0.5 text-black">
            Posizioni aperte
          </button>
          <div className="flex flex-1 items-center border-t-2 border-black pb-1 pl-5">
            <button type="button" className="w-[122px]">Esposizione</button>
            <span className="ml-5 h-7 w-0.5 bg-[#808080]" />
            <button type="button" className="ml-[18px] w-[1402px] text-left">Storico operazio</button>
            <button type="button">io</button>
            <span className="ml-5 h-7 w-0.5 bg-[#808080]" />
          </div>
        </div>
      </div>
    </section>
  )
}

function StatusBar() {
  const cell = "border-l-2 border-[#b4b4b4]"
  return (
    <footer className="flex h-[45px] shrink-0 border-t-2 border-white pt-1 text-[22px] leading-10">
      <span className="flex-1 pl-[3px]">Per aiuto, premi F1</span>
      <span className={clsx(cell, "w-[232px]")} />
      <span className={clsx(cell, "w-[203px]")} />
      <span className={clsx(cell, "w-[143px]")} />
      <span className={clsx(cell, "w-[142px]")} />
      <span className={clsx(cell, "w-[136px]")} />
      <span className={clsx(cell, "w-[140px]")} />
      <span className={clsx(cell, "w-[131px]")} />
      <span className={clsx(cell, "flex w-[262px] items-center gap-2 pl-2.5")}>
        <svg width="48" height="28" viewBox="0 0 48 28" aria-hidden="true">
          {[0, 1, 2, 3, 4, 5, 6, 7].map((i) => (
            <g key={i}>
              <rect x={i * 6} y="1" width="4" height={19 - i * 2} fill="#5c7a1e" />
              <rect x={i * 6} y={22 - i * 2} width="4" height={6 + i * 2} fill="#8f1f14" />
            </g>
          ))}
        </svg>
        54997/69 kb
      </span>
    </footer>
  )
}

/* ---------- dialog ---------- */

function PushButton({ children, focused, className }: { children: string; focused?: boolean; className?: string }) {
  return (
    <button
      type="button"
      className={clsx("h-[42px] border-2 bg-[#dddddd]", focused ? "border-[#4a80b8]" : "border-[#707070]", className)}
    >
      {children}
    </button>
  )
}

function ParamTable() {
  return (
    <div className="flex w-[914px] overflow-hidden border-2 border-[#828790] p-0.5">
      <div className="flex-1 overflow-hidden">
        <table className="w-full table-fixed border-separate border-spacing-0">
          <colgroup>
            <col className="w-[436px]" />
            <col />
          </colgroup>
          <thead className="bg-[#fcfcfc] text-left">
            <tr>
              <th className="h-8 border-2 border-r-[#dcdcdc] border-[#e4e4e4] pl-2.5 font-normal">Variabile</th>
              <th className="h-8 border-y-2 border-r-2 border-[#e4e4e4] pl-2.5 font-normal">Valore</th>
            </tr>
          </thead>
          <tbody>
            {params.map((param, i) => (
              <tr
                key={param.name}
                className={param.active ? "bg-[#e9f3fd]" : i % 2 === 1 ? "bg-[#ebebeb]" : "bg-white"}
              >
                <td className="h-10 border-r-2 border-b-2 border-[#cbcbcb] pt-0.5 pl-px whitespace-nowrap">
                  <div className="flex items-center gap-1.5">
                    <ParamIcon type={param.type} />
                    {param.name}
                  </div>
                </td>
                <td
                  className={clsx(
                    "h-10 border-b-2 border-[#cbcbcb] pt-0.5 pl-[5px] whitespace-nowrap",
                    param.value === RULE ? "text-[18px]" : "text-[22px]",
                  )}
                >
                  {param.value}
                </td>
              </tr>
            ))}
          </tbody>
        </table>
      </div>
      <div className="flex w-[34px] shrink-0 flex-col border-2 border-[#c4c4c4]">
        <button type="button" aria-label="Scorri su" className="flex h-[30px] items-center justify-center">
          <svg width="16" height="12" viewBox="0 0 16 12" aria-hidden="true"><path d="M2 10l6-8 6 8" fill="none" stroke="#606060" strokeWidth="2.500" /></svg>
        </button>
        <div className="flex h-[1152px] flex-col items-center justify-center gap-0.5 border-y-2 border-[#a6a6a6] bg-[#dadada]">
          <span className="h-0.5 w-3.5 bg-[#555]" />
          <span className="h-0.5 w-3.5 bg-[#555]" />
          <span className="h-0.5 w-3.5 bg-[#555]" />
          <span className="h-0.5 w-3.5 bg-[#555]" />
        </div>
        <button type="button" aria-label="Scorri giù" className="mt-auto flex h-[33px] items-center justify-center border-t-2 border-[#c4c4c4]">
          <svg width="16" height="12" viewBox="0 0 16 12" aria-hidden="true"><path d="M2 2l6 8 6-8" fill="none" stroke="#606060" strokeWidth="2.500" /></svg>
        </button>
      </div>
    </div>
  )
}

function ExpertDialog() {
  return (
    <div
      role="dialog"
      aria-labelledby="dialog-title"
      className="absolute top-0.5 bottom-2.5 left-[586px] flex w-[1238px] flex-col border-2 border-t-0 border-[#3d5560] bg-[#7fc8e6] px-3.5 pb-[13px]"
    >
      <div className="relative flex h-[61px] shrink-0 items-center justify-center">
        <h1 id="dialog-title" className="text-[29px] leading-9">Expert - Prop Leader EA - INDEX MASTER v1.0</h1>
        <div className="absolute -top-px -right-0.5 flex h-[43px] border-2 border-[#3d4f57]">
          <button type="button" aria-label="Guida" className="w-14 text-[26px] leading-8 font-bold">?</button>
          <button type="button" aria-label="Chiudi" className="flex w-[91px] items-center justify-center border-l-2 border-[#3d4f57] bg-[#b86152]">
            <svg width="18" height="18" viewBox="0 0 18 18" aria-hidden="true">
              <path d="M3 1l12 16M15 1L3 17" stroke="#000" strokeWidth="5" />
            </svg>
          </button>
        </div>
      </div>
      <div className="flex min-h-0 flex-1 flex-col bg-[#f0f0f0] pt-[13px] pr-2 pl-[13px] font-['Liberation_Sans',Arial,sans-serif] text-[21px] leading-6">
        <div className="flex h-[42px] items-end pl-1 text-[20px]">
          <button type="button" className="h-[38px] w-[161px] border-2 border-b-0 border-[#828790] bg-[#ebebeb]">Sul programma</button>
          <button type="button" className="h-[38px] w-[100px] border-2 border-b-0 border-l-0 border-[#828790] bg-[#ebebeb]">Comune</button>
          {/* the open tab hides the panel's top border */}
          <button type="button" className="relative z-10 -mb-0.5 h-[44px] w-[158px] border-2 border-b-0 border-[#828790] bg-white pb-1.5">Valori di input</button>
        </div>
        <div className="flex min-h-0 flex-1 justify-between border-2 border-[#828790] bg-white pt-[18px] pr-[23px] pb-[21px] pl-[22px]">
          <ParamTable />
          <div className="flex flex-col justify-end gap-6 pb-[3px]">
            <PushButton focused className="w-[206px]">Carica</PushButton>
            <PushButton className="w-[206px]">Salva</PushButton>
          </div>
        </div>
        <div className="relative flex h-[69px] shrink-0 justify-end gap-4 pt-2 pr-2.5">
          <PushButton className="w-[146px]">OK</PushButton>
          <PushButton className="w-[146px]">Cancel</PushButton>
          <PushButton className="w-[146px]">Resetta</PushButton>
          <svg width="16" height="16" viewBox="0 0 16 16" className="absolute -right-1 bottom-1" aria-hidden="true">
            <path d="M1 15h14M7 9h8M13 3h2" stroke="#b0b0b0" strokeWidth="2" strokeDasharray="2 4" />
          </svg>
        </div>
      </div>
    </div>
  )
}

function RestoreGlyph({ color }: { color: string }) {
  return (
    <svg width="20" height="20" viewBox="0 0 20 20" aria-hidden="true">
      <path d="M6 5V2h12v11h-4" fill="none" stroke={color} strokeWidth="2.500" />
      <rect x="2" y="7" width="11" height="11" fill="none" stroke={color} strokeWidth="3" />
    </svg>
  )
}

export default function App() {
  return (
    <div className="relative flex min-h-screen w-full flex-col overflow-hidden bg-[#f0f0f0] font-['Open_Sans','Noto_Sans',sans-serif] text-black">
      <div className="h-0.5 shrink-0 bg-black" />
      <header className="flex h-[45px] shrink-0 items-start bg-[#c6d4dc]">
        <span className="mt-[5px] ml-[3px] flex h-8 w-8 items-center justify-center bg-white text-[18px] leading-5 font-bold text-[#ee4248]">axi</span>
        <span className="ml-[1789px] text-[27px] leading-[46px]">30,H1]</span>
        <div className="mr-1 ml-auto flex h-10 border-2 border-t-0 border-[#5f6a70]">
          <button type="button" aria-label="Riduci" className="flex w-[55px] items-center justify-center pt-1">
            <span className="h-[7px] w-5 bg-black" />
          </button>
          <button type="button" aria-label="Ripristina" className="flex w-[52px] items-center justify-center border-x-2 border-[#5f6a70]">
            <RestoreGlyph color="#000" />
          </button>
          <button type="button" aria-label="Chiudi finestra" className="flex w-[91px] items-center justify-center">
            <svg width="18" height="16" viewBox="0 0 18 16" aria-hidden="true"><path d="M2 0l14 16M16 0L2 16" stroke="#000" strokeWidth="4" /></svg>
          </button>
        </div>
      </header>
      <nav className="flex h-[42px] shrink-0 items-center border-b-2 border-[#a0a0a0] pl-2 text-[22px] leading-7 text-[#a0a0a0]">
        <TerminalIcon />
        <div className="ml-4 flex gap-9">
          <button type="button">File</button>
          <button type="button">Visualizza</button>
          <button type="button">Inserisci</button>
          <button type="button">Grafici</button>
          <button type="button">Strument</button>
        </div>
        <div className="ml-auto flex h-[38px] border-2 border-[#b9b9b9] bg-[#f4f4f4]">
          <button type="button" aria-label="Riduci grafico" className="flex w-9 items-center justify-center pt-3">
            <span className="h-1 w-3 bg-[#93a0ad]" />
          </button>
          <button type="button" aria-label="Ripristina grafico" className="flex w-10 items-center justify-center border-x-2 border-[#b9b9b9]">
            <RestoreGlyph color="#93a0ad" />
          </button>
          <button type="button" aria-label="Chiudi grafico" className="flex w-9 items-center justify-center">
            <svg width="16" height="16" viewBox="0 0 16 16" aria-hidden="true"><path d="M2 1l12 14M14 1L2 15" stroke="#93a0ad" strokeWidth="3.500" /></svg>
          </button>
        </div>
      </nav>
      <MainToolbar />
      <DrawingToolbar />
      <main className="flex flex-1">
        <Navigator />
        <ChartPane />
      </main>
      <Terminal />
      <StatusBar />
      <ExpertDialog />
    </div>
  )
}
